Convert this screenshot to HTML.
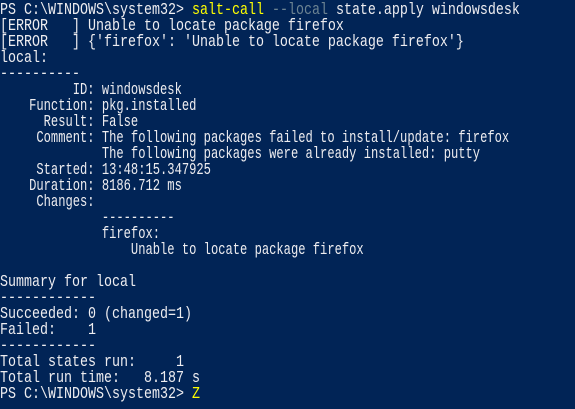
<!DOCTYPE html>
<html><head><meta charset="utf-8"><style>
html,body{margin:0;padding:0;}
body{width:575px;height:409px;background:#012456;overflow:hidden;}
.c{padding-top:3px;}
.l{height:16px;line-height:16px;font-family:"Liberation Mono",monospace;font-size:17px;color:#eeedf0;white-space:pre;transform-origin:0 0;transform:scaleX(0.784);}
.n{transform:scaleX(0.713);}
.y{color:#ffff00}.g{color:#6c8392}
</style></head><body><div class="c">
<div class="l">PS C:\WINDOWS\system32&gt; <span class="y">salt-call</span> <span class="g">--local</span> state.apply windowsdesk</div>
<div class="l">[ERROR   ] Unable to locate package firefox</div>
<div class="l">[ERROR   ] {'firefox': 'Unable to locate package firefox'}</div>
<div class="l">local:</div>
<div class="l">----------</div>
<div class="l n">          ID: windowsdesk</div>
<div class="l n">    Function: pkg.installed</div>
<div class="l n">      Result: False</div>
<div class="l n">     Comment: The following packages failed to install/update: firefox</div>
<div class="l n">              The following packages were already installed: putty</div>
<div class="l n">     Started: 13:48:15.347925</div>
<div class="l n">    Duration: 8186.712 ms</div>
<div class="l n">     Changes:</div>
<div class="l n">              ----------</div>
<div class="l n">              firefox:</div>
<div class="l n">                  Unable to locate package firefox</div>
<div class="l"> </div>
<div class="l">Summary for local</div>
<div class="l">------------</div>
<div class="l">Succeeded: 0 (changed=1)</div>
<div class="l">Failed:    1</div>
<div class="l">------------</div>
<div class="l">Total states run:     1</div>
<div class="l">Total run time:   8.187 s</div>
<div class="l">PS C:\WINDOWS\system32&gt; <span class="y">Z</span></div>
</div></body></html>
